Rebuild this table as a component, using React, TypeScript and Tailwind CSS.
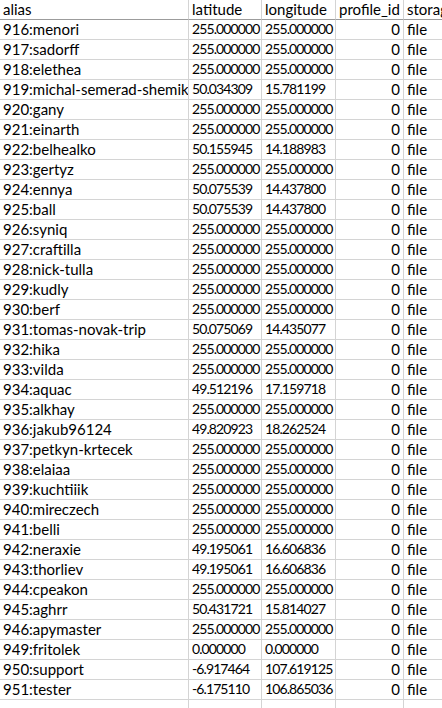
const rows: [string, string, string][] = [
  ["916:menori", "255.000000", "255.000000"],
  ["917:sadorff", "255.000000", "255.000000"],
  ["918:elethea", "255.000000", "255.000000"],
  ["919:michal-semerad-shemik", "50.034309", "15.781199"],
  ["920:gany", "255.000000", "255.000000"],
  ["921:einarth", "255.000000", "255.000000"],
  ["922:belhealko", "50.155945", "14.188983"],
  ["923:gertyz", "255.000000", "255.000000"],
  ["924:ennya", "50.075539", "14.437800"],
  ["925:ball", "50.075539", "14.437800"],
  ["926:syniq", "255.000000", "255.000000"],
  ["927:craftilla", "255.000000", "255.000000"],
  ["928:nick-tulla", "255.000000", "255.000000"],
  ["929:kudly", "255.000000", "255.000000"],
  ["930:berf", "255.000000", "255.000000"],
  ["931:tomas-novak-trip", "50.075069", "14.435077"],
  ["932:hika", "255.000000", "255.000000"],
  ["933:vilda", "255.000000", "255.000000"],
  ["934:aquac", "49.512196", "17.159718"],
  ["935:alkhay", "255.000000", "255.000000"],
  ["936:jakub96124", "49.820923", "18.262524"],
  ["937:petkyn-krtecek", "255.000000", "255.000000"],
  ["938:elaiaa", "255.000000", "255.000000"],
  ["939:kuchtiiik", "255.000000", "255.000000"],
  ["940:mireczech", "255.000000", "255.000000"],
  ["941:belli", "255.000000", "255.000000"],
  ["942:neraxie", "49.195061", "16.606836"],
  ["943:thorliev", "49.195061", "16.606836"],
  ["944:cpeakon", "255.000000", "255.000000"],
  ["945:aghrr", "50.431721", "15.814027"],
  ["946:apymaster", "255.000000", "255.000000"],
  ["949:fritolek", "0.000000", "0.000000"],
  ["950:support", "-6.917464", "107.619125"],
  ["951:tester", "-6.175110", "106.865036"],
];

// excel-ish grid cell, text sits on the bottom like in a sheet
const cell = "h-[20px] border-r border-b border-[#d4d4d4] px-[3px] pb-[1px] flex items-end whitespace-nowrap overflow-hidden";
const head = "h-[20px] border-r border-b border-r-[#d4d4d4] border-b-[#9c9c9c] px-[3px] pb-[1px] flex items-end whitespace-nowrap overflow-hidden";
const num = "text-[14px] tracking-[-0.9px]";

export default function App() {
  return (
    <div className="h-[708px] w-[442px] overflow-hidden bg-white text-[15px] leading-[18px] text-black" style={{ fontFamily: "Lato, 'Open Sans', sans-serif" }}>
      <div className="grid w-[560px] grid-cols-[189px_73px_74px_68px_156px]">
        <div className={head}>alias</div>
        <div className={head}>latitude</div>
        <div className={head}>longitude</div>
        <div className={head}>profile_id</div>
        <div className={head}>storage</div>
        {rows.map(([alias, lat, lon]) => (
          <div key={alias} className="contents">
            <div className={cell}>{alias}</div>
            <div className={`${cell} ${num}`}>{lat}</div>
            <div className={`${cell} ${num}`}>{lon}</div>
            <div className={`${cell} justify-end`}>0</div>
            <div className={cell}>file</div>
          </div>
        ))}
        <div className={cell}></div>
        <div className={cell}></div>
        <div className={cell}></div>
        <div className={cell}></div>
        <div className={cell}></div>
      </div>
    </div>
  );
}
